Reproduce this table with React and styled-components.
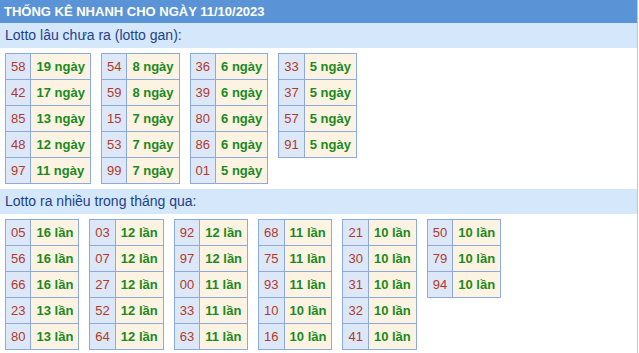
import React from "react";
import styled, { createGlobalStyle } from "styled-components";

const GlobalStyle = createGlobalStyle`
    html, body {
        margin: 0;
        padding: 0;
        background: #fff;
    }
    body {
        font-family: "Liberation Sans", Arial, sans-serif;
    }
`;

const Page = styled.div`
    width: 638px;
    height: 353px;
    box-sizing: border-box;
    border-right: 1px solid #b8c9e2;
    overflow: hidden;
`;

const TopBar = styled.div`
    height: 23px;
    width: 639px;
    background-color: #5b94d6;
    color: #fff;
    font-weight: bold;
    font-size: 13px;
    line-height: 23px;
    padding-left: 4px;
    box-sizing: border-box;
`;

const SectionTitle = styled.div`
    height: 25px;
    background-color: #d5e7fb;
    color: #1d428a;
    font-size: 14px;
    line-height: 25px;
    padding-left: 5px;
`;

const TableRow = styled.div`
    display: flex;
    align-items: flex-start;
    gap: 10px;
    padding: 5px;
`;

const Table = styled.table`
    border-collapse: collapse;
    font-size: 13px;
`;

const NumCell = styled.td`
    border: 1px solid #8eaadc;
    background-color: #dce8f8;
    color: #b2382c;
    height: 26px;
    padding: 0 5px;
    text-align: center;
    box-sizing: border-box;
`;

const CountCell = styled.td`
    border: 1px solid #8eaadc;
    background-color: #fdf3e2;
    color: #1a8a1e;
    font-weight: bold;
    height: 26px;
    padding: 0 5px;
    white-space: nowrap;
    box-sizing: border-box;
`;

const ganData = [
    [["58", 19], ["42", 17], ["85", 13], ["48", 12], ["97", 11]],
    [["54", 8], ["59", 8], ["15", 7], ["53", 7], ["99", 7]],
    [["36", 6], ["39", 6], ["80", 6], ["86", 6], ["01", 5]],
    [["33", 5], ["37", 5], ["57", 5], ["91", 5]],
];

const hotData = [
    [["05", 16], ["56", 16], ["66", 16], ["23", 13], ["80", 13]],
    [["03", 12], ["07", 12], ["27", 12], ["52", 12], ["64", 12]],
    [["92", 12], ["97", 12], ["00", 11], ["33", 11], ["63", 11]],
    [["68", 11], ["75", 11], ["93", 11], ["10", 10], ["16", 10]],
    [["21", 10], ["30", 10], ["31", 10], ["32", 10], ["41", 10]],
    [["50", 10], ["79", 10], ["94", 10]],
];

const LottoTable = ({ rows, unit }) => (
    <Table>
        <tbody>
            {rows.map(([num, count]) => (
                <tr key={num}>
                    <NumCell>{num}</NumCell>
                    <CountCell>{count} {unit}</CountCell>
                </tr>
            ))}
        </tbody>
    </Table>
);

const App = () => {
    return (
        <Page>
            <GlobalStyle />
            <TopBar>THỐNG KÊ NHANH CHO NGÀY 11/10/2023</TopBar>

            <SectionTitle>Lotto lâu chưa ra (lotto gan):</SectionTitle>
            <TableRow>
                {ganData.map((rows, i) => (
                    <LottoTable key={i} rows={rows} unit="ngày" />
                ))}
            </TableRow>

            <SectionTitle>Lotto ra nhiều trong tháng qua:</SectionTitle>
            <TableRow>
                {hotData.map((rows, i) => (
                    <LottoTable key={i} rows={rows} unit="lần" />
                ))}
            </TableRow>
        </Page>
    );
};

export default App;
